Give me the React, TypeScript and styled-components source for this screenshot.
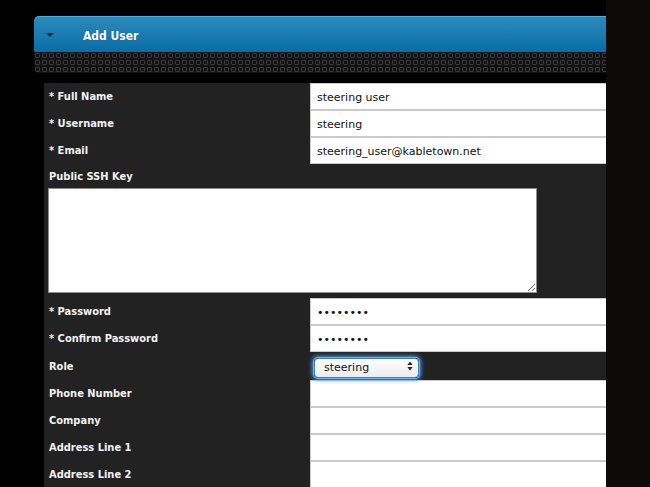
import styled, { createGlobalStyle } from "styled-components";

const GlobalStyle = createGlobalStyle`
  html, body {
    margin: 0;
    padding: 0;
    background: #000;
  }
  body {
    font-family: "DejaVu Sans", Verdana, sans-serif;
    overflow: hidden;
  }
`;

type Field = { label: string; value?: string; type?: string };

const topFields: Field[] = [
  { label: "* Full Name", value: "steering user" },
  { label: "* Username", value: "steering" },
  { label: "* Email", value: "steering_user@kabletown.net" },
];

const passwordFields: Field[] = [
  { label: "* Password", value: "steering", type: "password" },
  { label: "* Confirm Password", value: "steering", type: "password" },
];

const bottomFields: Field[] = [
  { label: "Phone Number" },
  { label: "Company" },
  { label: "Address Line 1" },
  { label: "Address Line 2" },
];

function FieldRow({ field }: { field: Field }) {
  return (
    <>
      <Label>{field.label}</Label>
      <Cell>
        <TextInput type={field.type || "text"} defaultValue={field.value || ""} readOnly />
      </Cell>
    </>
  );
}

export default function App() {
  return (
    <Page>
      <GlobalStyle />
      <Main>
        <Header>
          <Caret />
          <Title>Add User</Title>
        </Header>
        <Pattern />
        <FormPanel>
          {topFields.map((f) => (
            <FieldRow key={f.label} field={f} />
          ))}
          <WideLabel>Public SSH Key</WideLabel>
          <KeyArea />
          {passwordFields.map((f) => (
            <FieldRow key={f.label} field={f} />
          ))}
          <Label tall>Role</Label>
          <SelectCell>
            <SelectWrap>
              <RoleSelect defaultValue="steering">
                <option value="admin">admin</option>
                <option value="operations">operations</option>
                <option value="steering">steering</option>
              </RoleSelect>
              <Arrows width="6" height="10" viewBox="0 0 6 10">
                <path d="M3 0.5 L5.6 4 H0.4 Z" fill="#222" />
                <path d="M3 9.5 L5.6 6 H0.4 Z" fill="#222" />
              </Arrows>
            </SelectWrap>
          </SelectCell>
          {bottomFields.map((f) => (
            <FieldRow key={f.label} field={f} />
          ))}
        </FormPanel>
      </Main>
      <SideStrip />
    </Page>
  );
}

const Page = styled.div`
  display: flex;
  width: 650px;
  height: 487px;
  overflow: hidden;
  background: #000;
`;

const Main = styled.div`
  width: 606px;
  flex: none;
  padding: 16px 0 0 34px;
  box-sizing: border-box;
  overflow: hidden;
`;

const SideStrip = styled.div`
  flex: 1;
  background: #0c0b0a;
`;

const Header = styled.div`
  height: 36px;
  box-sizing: border-box;
  border-top: 1px solid #47b0e6;
  border-radius: 5px 0 0 0;
  background: linear-gradient(#2c8abb, #0a6da6);
  display: flex;
  align-items: center;
  padding: 0 0 0 12px;
`;

const Caret = styled.div`
  width: 0;
  height: 0;
  border-left: 4px solid transparent;
  border-right: 4px solid transparent;
  border-top: 4px solid #1c2e3b;
  margin-top: 1px;
`;

const Title = styled.div`
  margin: 3px 0 0 29px;
  color: #fff;
  font-family: "DejaVu Sans Condensed", "DejaVu Sans", sans-serif;
  font-weight: bold;
  font-size: 12px;
  text-shadow: 0 0 1px rgba(0, 0, 0, 0.3);
`;

const Pattern = styled.div`
  height: 21px;
  border-radius: 0 0 0 5px;
  background-color: #121212;
  background-image: radial-gradient(
    circle at center,
    transparent 0 1.6px,
    #3a3a3a 1.9px 2.7px,
    transparent 3px
  );
  background-size: 7px 7px;
  background-position: 0 0;
`;

const FormPanel = styled.div`
  margin: 10px 0 0 10px;
  background: #222;
  display: grid;
  grid-template-columns: 266px 1fr;
`;

const Label = styled.div<{ tall?: boolean }>`
  height: ${({ tall }) => (tall ? "28px" : "27px")};
  display: flex;
  align-items: center;
  padding-left: 5px;
  color: #f2f2f2;
  font-family: "DejaVu Sans Condensed", "DejaVu Sans", sans-serif;
  font-weight: bold;
  font-size: 11px;
`;

const WideLabel = styled(Label)`
  grid-column: 1 / -1;
  height: 24px;
`;

const Cell = styled.div`
  height: 27px;
`;

const TextInput = styled.input`
  display: block;
  width: 100%;
  height: 27px;
  box-sizing: border-box;
  margin: 0;
  border: 1px solid #cbcbcb;
  border-right: none;
  padding: 2px 6px 0;
  background: #fff;
  color: #111;
  font-family: "DejaVu Sans", Verdana, sans-serif;
  font-size: 11px;
  outline: none;
`;

const KeyArea = styled.textarea`
  grid-column: 1 / -1;
  width: 489px;
  height: 105px;
  box-sizing: border-box;
  margin: 0 0 5px 4px;
  border: 1px solid #8c8c8c;
  background: #fff;
  resize: both;
  outline: none;
`;

const SelectCell = styled.div`
  height: 28px;
  display: flex;
  align-items: center;
  padding-left: 4px;
`;

const SelectWrap = styled.div`
  position: relative;
  width: 105px;
  height: 20px;
`;

const RoleSelect = styled.select`
  appearance: none;
  width: 100%;
  height: 100%;
  box-sizing: border-box;
  margin: 0;
  border: 1px solid #3b7fc4;
  border-radius: 4px;
  padding: 0 0 0 9px;
  background: linear-gradient(#ffffff, #ececec);
  box-shadow: 0 0 0 1px #6fb3f0, 0 0 4px 2px #4c9be8;
  color: #111;
  font-family: "DejaVu Sans", Verdana, sans-serif;
  font-size: 11px;
  outline: none;
`;

const Arrows = styled.svg`
  position: absolute;
  right: 6px;
  top: 5px;
  pointer-events: none;
`;
